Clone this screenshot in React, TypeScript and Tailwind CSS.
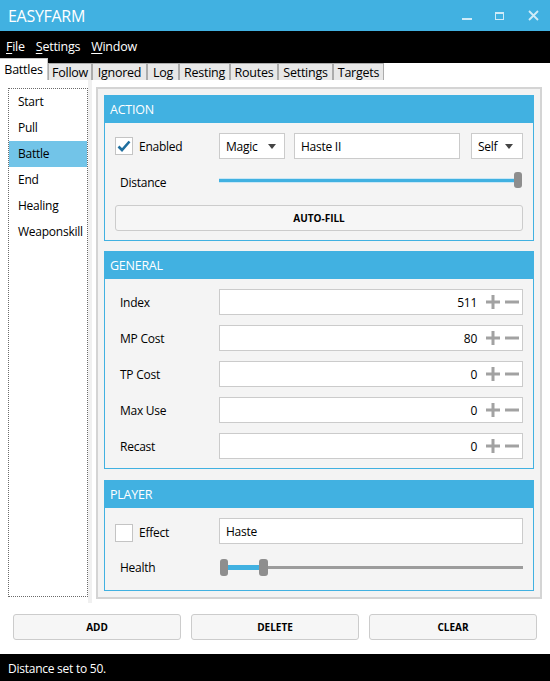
import React from "react";

const tabs = [
  { label: "Battles", w: "w-[48px]" },
  { label: "Follow", w: "w-[44px]" },
  { label: "Ignored", w: "w-[55px]" },
  { label: "Log", w: "w-[32px]" },
  { label: "Resting", w: "w-[51px]" },
  { label: "Routes", w: "w-[48px]" },
  { label: "Settings", w: "w-[55px]" },
  { label: "Targets", w: "w-[51px]" },
];

const listItems = ["Start", "Pull", "Battle", "End", "Healing", "Weaponskill"];

const numbers = [
  { label: "Index", value: "511" },
  { label: "MP Cost", value: "80" },
  { label: "TP Cost", value: "0" },
  { label: "Max Use", value: "0" },
  { label: "Recast", value: "0" },
];

function Group({ title, children }: { title: string; children: React.ReactNode }) {
  return (
    <div className="border border-[#41b1e1] bg-[#f4f4f4]">
      <div className="h-[27px] bg-[#41b1e1] flex items-center pl-[5px] pt-[2px] text-white text-[12.5px]">
        {title}
      </div>
      <div className="px-[10px]">{children}</div>
    </div>
  );
}

function Arrow() {
  return (
    <svg width="8" height="5" viewBox="0 0 8 5">
      <path d="M0 0 L8 0 L4 5 Z" fill="#444" />
    </svg>
  );
}

function Checkbox({ checked }: { checked?: boolean }) {
  return (
    <div className="w-[18px] h-[18px] bg-white border border-[#c4c4c4] flex items-center justify-center">
      {checked && (
        <svg width="14" height="12" viewBox="0 0 14 12">
          <path d="M1.5 6.5 L5 10 L12.5 1.5" stroke="#1f6f9f" strokeWidth="2.6" fill="none" />
        </svg>
      )}
    </div>
  );
}

function PlusMinus() {
  return (
    <div className="flex items-center gap-[5px] ml-[9px] mr-[3px]">
      <svg width="14" height="14" viewBox="0 0 14 14">
        <path d="M0 7 H14 M7 0 V14" stroke="#a2a2a2" strokeWidth="3" />
      </svg>
      <svg width="14" height="14" viewBox="0 0 14 14">
        <path d="M0 7 H14" stroke="#a2a2a2" strokeWidth="3" />
      </svg>
    </div>
  );
}

export default function App() {
  return (
    <div className="w-[550px] h-[681px] flex flex-col bg-white text-black font-['Open_Sans',sans-serif] text-[12px] tracking-[-0.25px] overflow-hidden">
      {/* Title bar */}
      <div className="h-[31px] bg-[#41b1e1] flex items-center pl-[8px] text-white tracking-normal">
        <span className="text-[16px] flex-1 tracking-[-0.3px]">EASYFARM</span>
        <div className="flex items-center h-full">
          <div className="w-[31px] flex justify-center pt-[6px]">
            <div className="w-[10px] h-[2px] bg-white/75" />
          </div>
          <div className="w-[35px] flex justify-center">
            <div className="w-[9px] h-[8px] border border-t-2 border-white/75" />
          </div>
          <div className="w-[33px] flex justify-center">
            <svg width="11" height="11" viewBox="0 0 11 11">
              <path d="M1 1 L10 10 M10 1 L1 10" stroke="rgba(255,255,255,0.75)" strokeWidth="1.8" />
            </svg>
          </div>
        </div>
      </div>

      {/* Menu */}
      <div className="h-[32px] bg-black text-white text-[12.5px] flex items-center pl-[6px] gap-[11px]">
        <span>
          <span className="underline underline-offset-2">F</span>ile
        </span>
        <span>
          <span className="underline underline-offset-2">S</span>ettings
        </span>
        <span>
          <span className="underline underline-offset-2">W</span>indow
        </span>
      </div>

      {/* Tabs */}
      <div className="h-[22px] -mt-[5px] flex items-end">
        {tabs.map((t, i) =>
          i === 0 ? (
            <div
              key={t.label}
              className={`${t.w} h-[22px] bg-white border-t border-r border-[#c8c8c8] flex items-center justify-center text-[12.5px] pt-[1px]`}
            >
              {t.label}
            </div>
          ) : (
            <div
              key={t.label}
              className={`${t.w} h-[17px] bg-[#e8e8e8] border border-b-0 border-[#acacac] flex items-center justify-center text-[12.5px] pt-[2px]`}
            >
              {t.label}
            </div>
          )
        )}
      </div>

      {/* Content */}
      <div className="flex-1 flex flex-col px-[8px] pt-[7px]">
        <div className="flex h-[512px]">
          {/* Left list */}
          <div className="w-[80px] h-[509px] mt-[1px] border border-dotted border-[#6a6a6a]">
            {listItems.map((item) =>
              item === "Battle" ? (
                <div key={item} className="h-[26px] flex items-center pl-[9px] bg-[#72c4e8]">
                  {item}
                </div>
              ) : (
                <div key={item} className="h-[26px] flex items-center pl-[9px]">
                  {item}
                </div>
              )
            )}
          </div>
          <div className="w-[4px] -mt-[7px] h-[523px] bg-[#f0f0f0]" />
          <div className="w-[4px]" />

          {/* Panel */}
          <div className="flex-1 border-2 border-[#d4d4d4] bg-[#f3f3f3] p-[6px] flex flex-col">
            <Group title="ACTION">
              <div className="pt-[10px] pb-[9px]">
                <div className="h-[26px] flex items-center">
                  <div className="w-[104px] flex items-center gap-[6px]">
                    <Checkbox checked />
                    <span className="pt-[2px]">Enabled</span>
                  </div>
                  <div className="w-[66px] h-[26px] bg-white border border-[#cbcbcb] flex items-center justify-between pl-[6px] pr-[8px]">
                    <span className="pt-[2px]">Magic</span>
                    <Arrow />
                  </div>
                  <div className="flex-1 ml-[9px] h-[26px] bg-white border border-[#cbcbcb] flex items-center pl-[6px] pt-[1px]">
                    Haste II
                  </div>
                  <div className="w-[52px] ml-[11px] h-[26px] bg-white border border-[#cbcbcb] flex items-center justify-between pl-[6px] pr-[9px]">
                    <span className="pt-[2px]">Self</span>
                    <Arrow />
                  </div>
                </div>
                <div className="h-[26px] mt-[8px] flex items-center">
                  <div className="w-[104px] pl-[5px] pt-[6px]">Distance</div>
                  <div className="flex-1 flex items-center pr-[1px]">
                    <div className="flex-1 h-[5px] bg-[#c9e7f6] flex items-center">
                      <div className="w-full h-[3px] bg-[#41b1e1]" />
                    </div>
                    <div className="w-[8px] h-[16px] rounded-[3px] bg-[#8e8e8e]" />
                  </div>
                </div>
                <div className="h-[26px] mt-[12px] bg-[#f6f6f6] border border-[#cccccc] rounded-[3px] flex items-center justify-center text-[10px] font-bold tracking-normal">
                  AUTO-FILL
                </div>
              </div>
            </Group>

            <div className="mt-[10px]">
              <Group title="GENERAL">
                <div className="pt-[10px] pb-[9px] flex flex-col gap-[10px]">
                  {numbers.map((n) => (
                    <div key={n.label} className="h-[26px] flex items-center">
                      <div className="w-[104px] pl-[5px] pt-[2px]">{n.label}</div>
                      <div className="flex-1 h-[26px] bg-white border border-[#cbcbcb] flex items-center justify-end">
                        <span className="pt-[2px]">{n.value}</span>
                        <PlusMinus />
                      </div>
                    </div>
                  ))}
                </div>
              </Group>
            </div>

            <div className="mt-[11px]">
              <Group title="PLAYER">
                <div className="pt-[10px] pb-[10px]">
                  <div className="h-[26px] flex items-center">
                    <div className="w-[104px] flex items-center gap-[6px] pt-[3px]">
                      <Checkbox />
                      <span className="pt-[1px]">Effect</span>
                    </div>
                    <div className="flex-1 h-[26px] bg-white border border-[#cbcbcb] flex items-center pl-[6px] pt-[1px]">
                      Haste
                    </div>
                  </div>
                  <div className="h-[26px] mt-[10px] flex items-center">
                    <div className="w-[104px] pl-[5px] pt-[2px]">Health</div>
                    <div className="flex-1 flex items-center">
                      <div className="w-[8px] h-[17px] ml-[1px] rounded-[3px] bg-[#8e8e8e]" />
                      <div className="w-[31px] h-[5px] bg-[#41b1e1]" />
                      <div className="w-[9px] h-[17px] rounded-[3px] bg-[#8e8e8e]" />
                      <div className="flex-1 h-[3px] bg-[#9c9c9c]" />
                    </div>
                  </div>
                </div>
              </Group>
            </div>
          </div>
        </div>

        {/* Buttons */}
        <div className="flex gap-[10px] px-[5px] mt-[15px]">
          {["ADD", "DELETE", "CLEAR"].map((b) => (
            <div
              key={b}
              className="flex-1 h-[26px] bg-[#f6f6f6] border border-[#cccccc] rounded-[3px] flex items-center justify-center text-[10px] font-bold tracking-normal"
            >
              {b}
            </div>
          ))}
        </div>
      </div>

      {/* Status */}
      <div className="h-[27px] bg-black text-white flex items-center pl-[8px] pt-[2px] text-[12px]">
        Distance set to 50.
      </div>
    </div>
  );
}
